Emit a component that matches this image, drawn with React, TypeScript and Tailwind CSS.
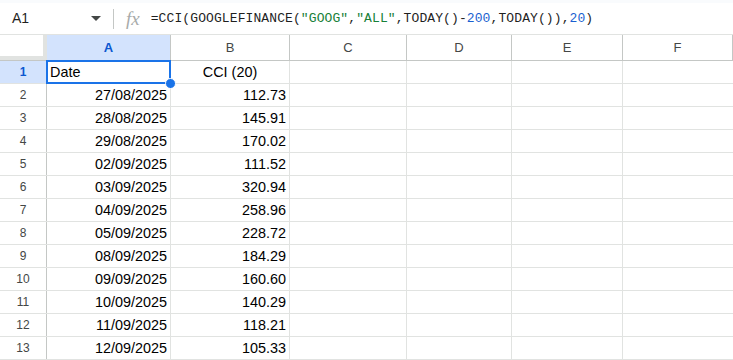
import { useState } from "react";

const rows: [string, string][] = [
  ["27/08/2025", "112.73"],
  ["28/08/2025", "145.91"],
  ["29/08/2025", "170.02"],
  ["02/09/2025", "111.52"],
  ["03/09/2025", "320.94"],
  ["04/09/2025", "258.96"],
  ["05/09/2025", "228.72"],
  ["08/09/2025", "184.29"],
  ["09/09/2025", "160.60"],
  ["10/09/2025", "140.29"],
  ["11/09/2025", "118.21"],
  ["12/09/2025", "105.33"],
];

const cols = [
  { id: "A", w: "w-[124px]" },
  { id: "B", w: "w-[119px]" },
  { id: "C", w: "w-[117px]" },
  { id: "D", w: "w-[105px]" },
  { id: "E", w: "w-[111px]" },
  { id: "F", w: "flex-1" },
];

const Formula = () => (
  <span className="whitespace-pre font-['Liberation_Mono',monospace] text-[13px] tracking-[0.1px] text-[#1f1f1f]">
    =CCI(GOOGLEFINANCE(
    <span className="text-[#188038]">"GOOG"</span>,
    <span className="text-[#188038]">"ALL"</span>,TODAY()-
    <span className="text-[#1a5fd0]">200</span>,TODAY()),
    <span className="text-[#1a5fd0]">20</span>)
  </span>
);

export default function App() {
  const [active] = useState("A1");

  return (
    <div className="h-[360px] w-[733px] overflow-hidden bg-white font-['Liberation_Sans',Arial,sans-serif]">
      {/* formula bar */}
      <div className="h-[3px] bg-[#f9fbfd]" />
      <div className="flex h-[32px] items-center border-b border-[#e1e3e1]">
        <div className="flex w-[113px] items-center pl-[12px] pr-[12px]">
          <span className="text-[14px] text-[#1f1f1f]">{active}</span>
          <svg className="ml-auto" width="10" height="6" viewBox="0 0 10 6">
            <path d="M0 0h10L5 5z" fill="#444746" />
          </svg>
        </div>
        <div className="h-[20px] w-px bg-[#c4c7c5]" />
        <span className="ml-[12px] mr-[11px] font-['Liberation_Serif',serif] text-[19px] italic leading-none text-[#a8abaa]">
          fx
        </span>
        <Formula />
      </div>

      {/* column headers */}
      <div className="flex h-[26px] border-b border-[#c4c7c5]">
        <div className="w-[47px] border-b-[4px] border-r-[4px] border-[#e1e3e1] bg-white" />
        {cols.map((c) => (
          <div
            key={c.id}
            className={[
              c.w,
              "flex items-center justify-center border-r border-[#c4c7c5] text-[13px]",
              c.id === "A"
                ? "bg-[#d3e3fd] font-bold text-[#0b57d0]"
                : "text-[#444746]",
            ].join(" ")}
          >
            {c.id}
          </div>
        ))}
      </div>

      {/* rows */}
      {[["Date", "CCI (20)"] as [string, string], ...rows].map((r, i) => {
        const first = i === 0;
        return (
          <div key={i} className="flex h-[23px] border-b border-[#e1e3e1]">
            <div
              className={[
                "flex w-[47px] items-center justify-center border-r border-[#c4c7c5] text-[12px]",
                first
                  ? "bg-[#d3e3fd] font-bold text-[#0b57d0]"
                  : "text-[#444746]",
              ].join(" ")}
            >
              {i + 1}
            </div>
            <div
              className={[
                "relative flex w-[124px] items-center border-r border-[#e1e3e1] px-[3px] pt-px text-[14.4px] text-black",
                first ? "z-10 justify-start" : "justify-end",
              ].join(" ")}
            >
              {first && (
                <>
                  <div className="pointer-events-none absolute -left-px -top-px bottom-[-1px] right-[-1px] border-2 border-[#1a73e8]" />
                  <div className="absolute bottom-[-6px] right-[-6px] h-[11px] w-[11px] rounded-full border border-white bg-[#1a73e8]" />
                </>
              )}
              {r[0]}
            </div>
            <div
              className={[
                "flex w-[119px] items-center border-r border-[#e1e3e1] px-[3px] pt-px text-[14.4px] text-black",
                first ? "justify-center" : "justify-end",
              ].join(" ")}
            >
              {r[1]}
            </div>
            <div className="w-[117px] border-r border-[#e1e3e1]" />
            <div className="w-[105px] border-r border-[#e1e3e1]" />
            <div className="w-[111px] border-r border-[#e1e3e1]" />
            <div className="flex-1" />
          </div>
        );
      })}
    </div>
  );
}
